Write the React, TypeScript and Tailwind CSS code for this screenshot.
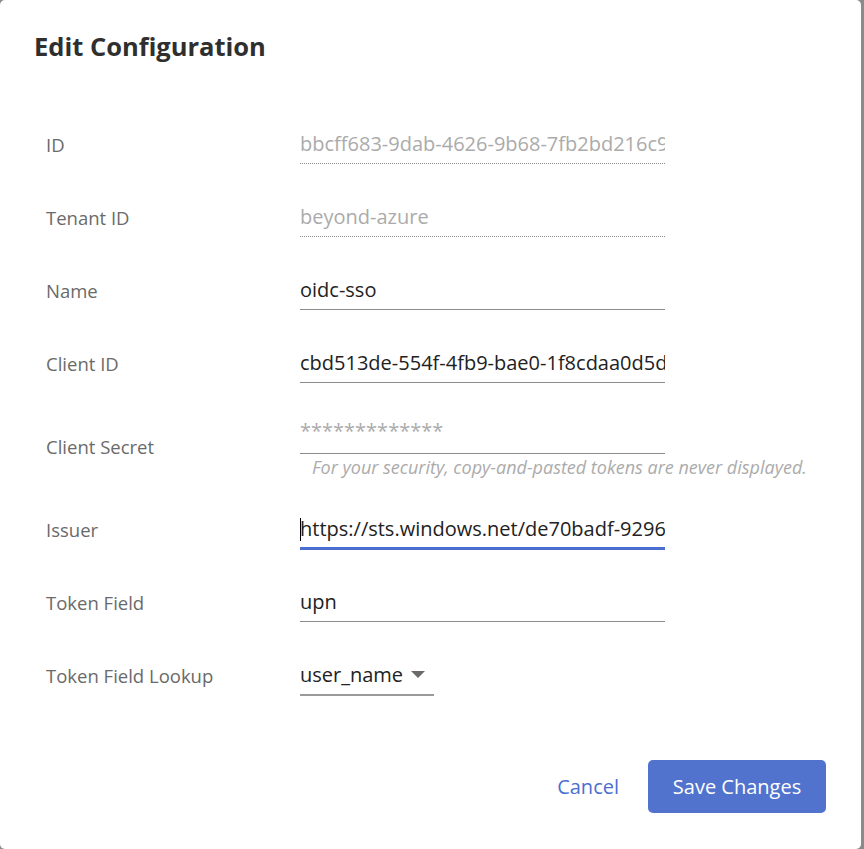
import React from "react";

const font = { fontFamily: '"Open Sans", "Liberation Sans", sans-serif' };

interface FieldRowProps {
  label: string;
  height: string;
  children: React.ReactNode;
}

const FieldRow: React.FC<FieldRowProps> = ({ label, height, children }) => (
  <div className={`flex items-center ${height}`}>
    <div className="w-[254px] shrink-0 text-[18.5px] text-[#6a6a6a]">{label}</div>
    <div className="flex-1">{children}</div>
  </div>
);

const TextInput: React.FC<{
  value: string;
  readOnly?: boolean;
  focused?: boolean;
  secret?: boolean;
}> = ({ value, readOnly, focused, secret }) => (
  <div
    className={`relative w-[365px] overflow-hidden whitespace-nowrap ${
      secret ? "pt-[4px] pb-[10px]" : "pt-[7px]"
    } ${
      readOnly
        ? "pb-[7px] border-b border-dotted border-[#8c8c8c]"
        : focused
          ? "pb-[6px] border-b-[3px] border-[#4a6fd1]"
          : secret
            ? "border-b border-[#8c8c8c]"
            : "pb-[7px] border-b border-[#8c8c8c]"
    }`}
  >
    <div
      className={`h-6 leading-6 text-[20px] ${
        readOnly || secret ? "text-[#ababab]" : "text-[#222]"
      }`}
    >
      {value}
    </div>
    {focused && (
      <span className="absolute left-0 top-[8px] h-[23px] w-px bg-black" />
    )}
  </div>
);

export default function App() {
  return (
    <div className="w-[864px] h-[849px] bg-[#8b8b8b] flex" style={font}>
      <div className="w-[861px] h-full bg-white rounded-[5px] flex flex-col">
        <h1 className="pl-[34px] pt-[30px] text-[25.5px] font-bold text-[#2f2f2f] leading-8 h-[78px]">
          Edit Configuration
        </h1>

        <div className="pl-[46px] pt-[30px] flex flex-col">
          <FieldRow label="ID" height="h-[73px]">
            <TextInput value="bbcff683-9dab-4626-9b68-7fb2bd216c9" readOnly />
          </FieldRow>
          <FieldRow label="Tenant ID" height="h-[73px]">
            <TextInput value="beyond-azure" readOnly />
          </FieldRow>
          <FieldRow label="Name" height="h-[73px]">
            <TextInput value="oidc-sso" />
          </FieldRow>
          <FieldRow label="Client ID" height="h-[73px]">
            <TextInput value="cbd513de-554f-4fb9-bae0-1f8cdaa0d5d" />
          </FieldRow>
          <FieldRow label="Client Secret" height="h-[93px]">
            <div className="flex flex-col">
              <TextInput value="*************" secret />
              <div className="pl-3 pt-[1px] h-6 leading-6 text-[18px] italic text-[#ababab] whitespace-nowrap">
                For your security, copy-and-pasted tokens are never displayed.
              </div>
            </div>
          </FieldRow>
          <FieldRow label="Issuer" height="h-[73px]">
            <TextInput value="https://sts.windows.net/de70badf-9296-" focused />
          </FieldRow>
          <FieldRow label="Token Field" height="h-[73px]">
            <TextInput value="upn" />
          </FieldRow>
          <FieldRow label="Token Field Lookup" height="h-[73px]">
            <div className="w-[134px] pt-[7px] pb-[7px] border-b-2 border-[#9a9a9a] flex items-center">
              <span className="h-6 leading-6 text-[20px] text-[#222]">user_name</span>
              <svg width="14" height="8" viewBox="0 0 14 8" className="ml-[8px]">
                <path d="M0 0 L14 0 L7 7 Z" fill="#6a6a6a" />
              </svg>
            </div>
          </FieldRow>
        </div>

        <div className="mt-auto mb-[36px] pr-[35px] flex justify-end items-center gap-[29px]">
          <button className="text-[20px] text-[#4a6fd1]">Cancel</button>
          <button className="w-[178px] h-[53px] rounded-[5px] bg-[#5173cd] text-white text-[20px]">
            Save Changes
          </button>
        </div>
      </div>
    </div>
  );
}
